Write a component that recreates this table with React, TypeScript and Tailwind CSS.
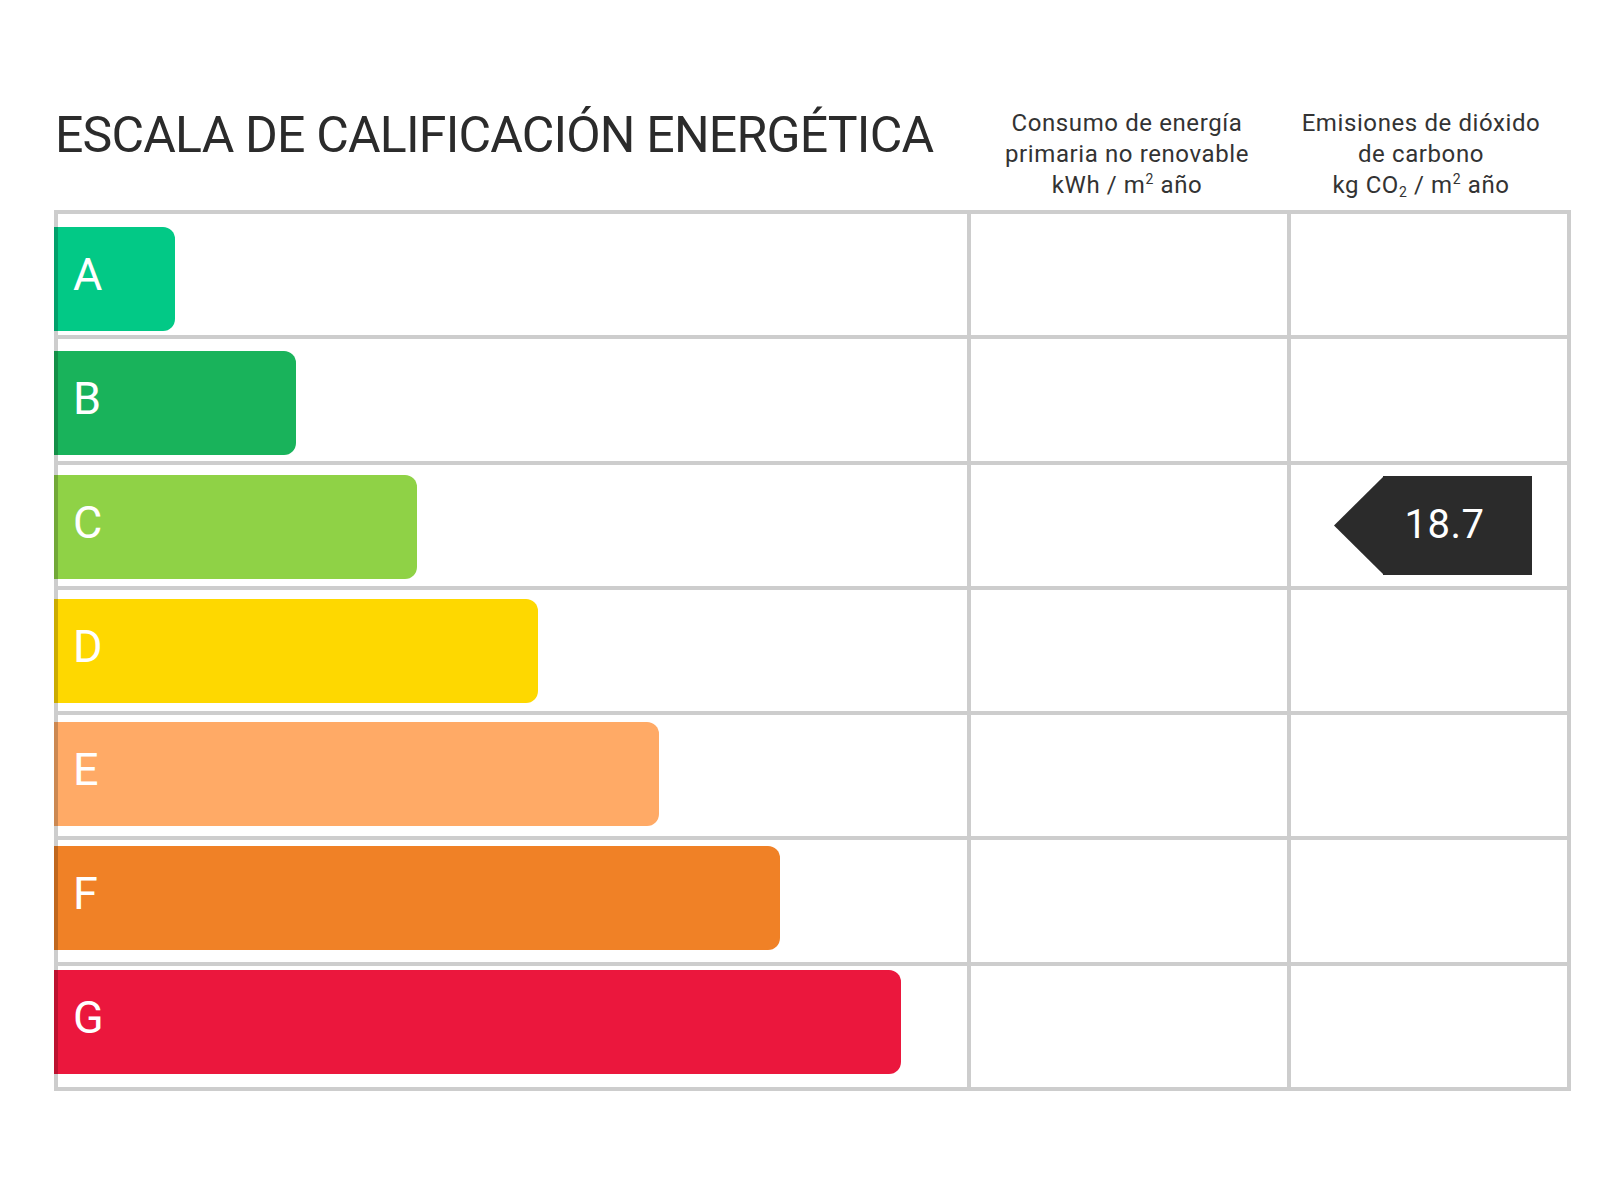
import React from 'react';

const ratings = [
  { letter: 'A', bar: 'bg-[#02c986]', width: 'w-[121px]', top: 'mt-[13px]' },
  { letter: 'B', bar: 'bg-[#19b35b]', width: 'w-[242px]', top: 'mt-[11.5px]' },
  { letter: 'C', bar: 'bg-[#8fd246]', width: 'w-[363px]', top: 'mt-[10px]' },
  { letter: 'D', bar: 'bg-[#fed800]', width: 'w-[484px]', top: 'mt-[8.7px]' },
  { letter: 'E', bar: 'bg-[#ffaa66]', width: 'w-[605px]', top: 'mt-[7.2px]' },
  { letter: 'F', bar: 'bg-[#f08126]', width: 'w-[726px]', top: 'mt-[5.7px]' },
  { letter: 'G', bar: 'bg-[#eb173d]', width: 'w-[847px]', top: 'mt-[4.3px]' },
];

// emissions value sits on the C row
const emissionsRow = 2;
const emissionsValue = '18.7';

function Badge({ value }: { value: string }) {
  return (
    <div className="flex items-center">
      <svg width="50" height="99" viewBox="0 0 50 99" className="block shrink-0 -mr-px">
        <polygon points="50,0 0,49.5 50,99" fill="#2b2b2b" />
      </svg>
      <div className="w-[149px] h-[99px] bg-[#2b2b2b] text-white text-[40px] leading-none tracking-[0.5px] flex items-center justify-center pr-[26px]">
        {value}
      </div>
    </div>
  );
}

function Sup({ children }: { children: React.ReactNode }) {
  return <span className="relative -top-[9px] text-[14px] leading-none">{children}</span>;
}

function Sub({ children }: { children: React.ReactNode }) {
  return <span className="relative top-[4px] text-[14px] leading-none">{children}</span>;
}

export default function App() {
  return (
    <div className="min-h-screen bg-white text-[#2b2b2b] font-['Roboto','Liberation_Sans',sans-serif]">
      <div className="pl-[54px]">
        <div className="grid grid-cols-[913px_320px_280px] h-[210px]">
          <h1 className="pt-[105px] text-[50px] leading-[60px] font-normal whitespace-nowrap pl-[1px] tracking-[-0.8px]">
            ESCALA DE CALIFICACIÓN ENERGÉTICA
          </h1>
          <div className="pt-[108px] text-center text-[24px] leading-[31px] tracking-[0.6px] text-[#333]">
            Consumo de energía
            <br />
            primaria no renovable
            <br />
            kWh / m<Sup>2</Sup> año
          </div>
          <div className="pt-[108px] text-center text-[24px] leading-[31px] tracking-[0.6px] text-[#333] pr-[12px]">
            Emisiones de dióxido
            <br />
            de carbono
            <br />
            kg CO<Sub>2</Sub> / m<Sup>2</Sup> año
          </div>
        </div>

        <div className="w-[1517px] h-[881px] border-4 border-[#cdcdcd] bg-[#cdcdcd] grid grid-cols-[909px_316px_276px] grid-rows-7 gap-[4px]">
          {ratings.map((r, i) => (
            <React.Fragment key={r.letter}>
              <div className="bg-white">
                <div
                  className={`${r.bar} ${r.width} ${r.top} -ml-[4px] h-[104px] rounded-r-[12px] border-l-4 border-l-black/20 flex items-center pl-[15px] pb-[9px] text-white text-[45px] leading-none`}
                >
                  {r.letter}
                </div>
              </div>
              <div className="bg-white" />
              <div className="bg-white flex items-center justify-end pr-[35px]">
                {i === emissionsRow && <Badge value={emissionsValue} />}
              </div>
            </React.Fragment>
          ))}
        </div>
      </div>
    </div>
  );
}
